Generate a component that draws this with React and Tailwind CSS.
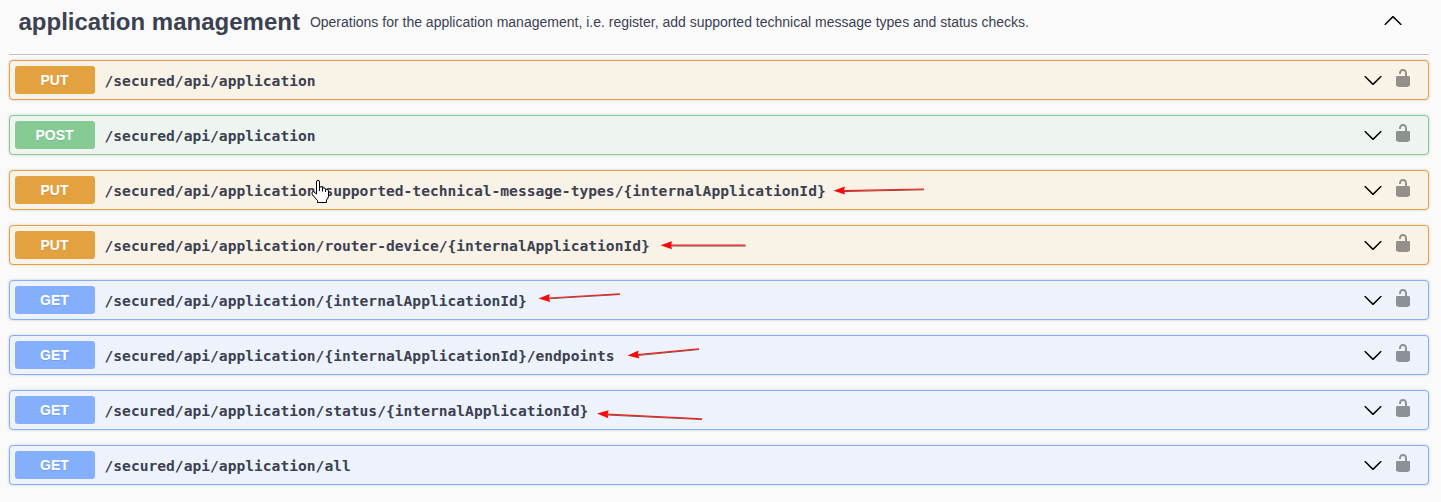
const themes = {
  PUT: { row: 'border-[#e5a23e] bg-[#f9f2e6]', badge: 'bg-[#e3a13f]' },
  POST: { row: 'border-[#86cb94] bg-[#eef5f0]', badge: 'bg-[#86cb94]' },
  GET: { row: 'border-[#84b0fb] bg-[#edf2fb]', badge: 'bg-[#84affc]' },
};

const operations = [
  { method: 'PUT', path: '/secured/api/application' },
  { method: 'POST', path: '/secured/api/application' },
  { method: 'PUT', path: '/secured/api/application/supported-technical-message-types/{internalApplicationId}' },
  { method: 'PUT', path: '/secured/api/application/router-device/{internalApplicationId}' },
  { method: 'GET', path: '/secured/api/application/{internalApplicationId}' },
  { method: 'GET', path: '/secured/api/application/{internalApplicationId}/endpoints' },
  { method: 'GET', path: '/secured/api/application/status/{internalApplicationId}' },
  { method: 'GET', path: '/secured/api/application/all' },
];

// Annotation arrows: tip first, then tail, in page coordinates.
const arrows = [
  { tip: [833.5, 190.8], tail: [924, 189], under: '#8a4038' },
  { tip: [660.5, 245.2], tail: [745.5, 245.2], under: '#5a5a48' },
  { tip: [538.5, 298.6], tail: [620, 293.8], under: '#6b5a5e' },
  { tip: [627.5, 355.6], tail: [699, 348.8], under: '#6b5a5e' },
  { tip: [597, 413.6], tail: [702, 418.8], under: '#6b5a5e' },
];

function Chevron({ up = false }) {
  return (
    <svg viewBox="0 0 20 20" className={up ? 'size-5 rotate-180' : 'size-5'}>
      <path d="M17.418 6.109c.272-.268.709-.268.979 0s.271.701 0 .969l-7.908 7.83c-.27.268-.707.268-.979 0l-7.908-7.83c-.27-.268-.27-.701 0-.969.271-.268.709-.268.979 0L10 13.25l7.418-7.141z" />
    </svg>
  );
}

function Unlocked() {
  return (
    <svg viewBox="0 0 20 20" className="size-5 opacity-40">
      <path d="M15.8 8H14V5.6C14 2.703 12.665 1 10 1 7.334 1 6 2.703 6 5.6V6h2v-.801C8 3.754 8.797 3 10 3c1.203 0 2 .754 2 2.199V8H4c-.553 0-1 .646-1 1.199V17c0 .549.428 1.139.951 1.307l1.197.387C5.672 18.861 6.55 19 7.1 19h5.8c.549 0 1.428-.139 1.951-.307l1.196-.387c.524-.167.953-.757.953-1.306V9.199C17 8.646 16.352 8 15.8 8z" />
    </svg>
  );
}

function Operation({ method, path }) {
  const theme = themes[method];
  return (
    <div className={`flex h-10 items-center rounded border pr-[15px] pl-[5px] shadow-[0_0_3px_rgba(0,0,0,0.19)] ${theme.row}`}>
      <span className={`h-7 w-20 rounded-[3px] pr-px text-center text-sm leading-7 font-bold text-white [text-shadow:0_1px_0_rgba(0,0,0,0.1)] ${theme.badge}`}>
        {method}
      </span>
      <span className="ml-[9.5px] flex-1 pt-0.5 font-['DejaVu_Sans_Mono',monospace] text-[14.61px] leading-5 font-bold whitespace-nowrap">
        {path}
      </span>
      <Chevron />
      <span className="mb-1 ml-2.5">
        <Unlocked />
      </span>
    </div>
  );
}

function Arrow({ tip, tail, under }) {
  const dx = tail[0] - tip[0];
  const dy = tail[1] - tip[1];
  const length = Math.hypot(dx, dy);
  const angle = (Math.atan2(dy, dx) * 180) / Math.PI;
  return (
    <g transform={`translate(${tip[0]} ${tip[1]}) rotate(${angle})`}>
      <path d={`M10 .8H${length}`} stroke={under} strokeWidth="1" />
      <path d={`M10 0H${length}`} stroke="#f5201c" strokeWidth="1.2" />
      <path d="M0 0L11.5 -4L10.5 0L11.5 4Z" fill="#fa0808" />
    </g>
  );
}

export default function App() {
  return (
    <main className="relative h-[502px] w-[1441px] overflow-hidden bg-[#fafafa] pr-3 pl-[9px] font-['Liberation_Sans',Arial,sans-serif] text-[#3b4151]">
      <header className="flex h-[55px] items-center border-b border-[#c0c1c4] pr-[26px] pb-[11px] pl-[9.5px]">
        <h1 className="text-2xl leading-8 font-bold whitespace-nowrap">application management</h1>
        <p className="ml-2.5 flex-1 text-sm whitespace-nowrap">
          Operations for the application management, i.e. register, add supported technical message types and status checks.
        </p>
        <span className="mb-0.5">
          <Chevron up />
        </span>
      </header>
      <section className="mt-[5px] flex flex-col gap-[15px]">
        {operations.map((operation, index) => (
          <Operation key={index} {...operation} />
        ))}
      </section>
      <svg viewBox="0 0 1441 502" className="pointer-events-none absolute top-0 left-0 h-[502px] w-[1441px]" fill="none">
        {arrows.map((arrow, index) => (
          <Arrow key={index} {...arrow} />
        ))}
      </svg>
      <svg viewBox="0 0 18 25" className="pointer-events-none absolute top-[179px] left-[311px] h-[25px] w-[18px]">
        <path
          d="M5.5 15V3Q5.5 1.2 7 1.2T8.5 3V8Q11.5 7 11.5 9Q14.5 8.3 14.5 10.3Q17.5 9.8 17.5 12V17Q17.5 19 15.5 21V23.5H6.5V21.5L1.2 15.5Q.2 12.2 2.5 12.6Z"
          fill="white"
          stroke="black"
        />
        <path d="M8.5 7.5V12M11.5 9V12.5M14.5 10.5V13" fill="none" stroke="black" />
      </svg>
    </main>
  );
}
